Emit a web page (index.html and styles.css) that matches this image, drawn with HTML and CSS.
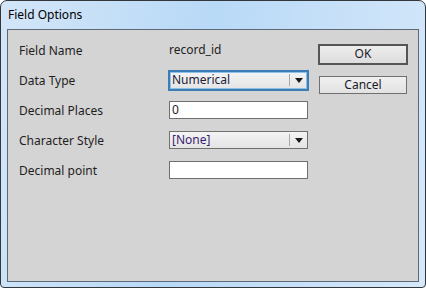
FILE: index.html
```html
<!DOCTYPE html>
<html lang="en">
<head>
    <meta charset="UTF-8">
    <meta name="viewport" content="width=device-width, initial-scale=1.0">
    <title>Field Options</title>
    <link rel="stylesheet" href="styles.css">
</head>
<body>

    <div class="window">
        <div class="titlebar">Field Options</div>

        <div class="client">
            <div class="form">
                <div class="label">Field Name</div>
                <div class="value">record_id</div>

                <div class="label">Data Type</div>
                <div class="select focused">
                    <span class="select-text">Numerical</span>
                    <span class="select-sep"></span>
                    <span class="select-arrow"></span>
                </div>

                <div class="label">Decimal Places</div>
                <div class="input">0</div>

                <div class="label">Character Style</div>
                <div class="select">
                    <span class="select-text none">[None]</span>
                    <span class="select-sep"></span>
                    <span class="select-arrow"></span>
                </div>

                <div class="label">Decimal point</div>
                <div class="input"></div>
            </div>

            <!-- botoes -->
            <div class="buttons">
                <div class="btn default">OK</div>
                <div class="btn">Cancel</div>
            </div>
        </div>
    </div>

</body>
</html>
```

FILE: styles.css
```css
body {
    margin: 0;
    font-family: "Noto Sans", "Open Sans", sans-serif;
    font-size: 12px;
    color: #1e1e1e;
    background-color: #ffffff;
}

.window {
    width: 424px;
    height: 286px;
    border: 1px solid #33373c;
    border-radius: 7px 7px 4px 4px;
    background: linear-gradient(100deg, #d3e6f8 0%, #b8d9f7 45%, #d6e8fa 100%);
    display: flex;
    flex-direction: column;
}

.titlebar {
    height: 28px;
    line-height: 28px;
    padding-left: 7px;
    font-size: 12px;
    color: #000;
}

.client {
    flex: 1;
    margin: 0 6px 5px 6px;
    border: 1px solid #5d6976;
    background-color: #d4d4d4;
    display: flex;
}

.form {
    display: grid;
    grid-template-columns: 150px 139px;
    grid-auto-rows: 30px;
    align-items: center;
    padding: 5px 0 0 11px;
}

.label {
    color: #1e1e1e;
}

.value {
    color: #1e1e1e;
    margin-top: -1px;
}

.input {
    height: 16px;
    line-height: 16px;
    border: 1px solid #6f6f6f;
    background-color: #ffffff;
    padding-left: 2px;
    color: #1e1e1e;
}

.select {
    height: 16px;
    border: 1px solid #707070;
    background: linear-gradient(#f4f4f4, #e4e4e4);
    display: flex;
    align-items: center;
}

.select.focused {
    height: 17px;
    margin: 0 -1px;
    border: 2px solid #3d7db5;
    box-shadow: inset 0 0 0 1px #8fc0e8;
}

.select-text {
    flex: 1;
    padding-left: 2px;
    line-height: 16px;
    color: #1c1c3a;
}

.select-text.none {
    color: #3a1e72;
}

.select-sep {
    width: 1px;
    height: 12px;
    background-color: #a8a8a8;
}

.select-arrow {
    width: 17px;
    display: flex;
    justify-content: center;
}

.select-arrow::before {
    content: "";
    border-left: 4px solid transparent;
    border-right: 4px solid transparent;
    border-top: 5px solid #1a1a1a;
}

.buttons {
    display: flex;
    flex-direction: column;
    padding: 14px 0 0 10px;
}

.btn {
    width: 86px;
    height: 16px;
    line-height: 16px;
    border: 1px solid #707070;
    background: linear-gradient(#f0f0f0, #e2e2e2);
    text-align: center;
    color: #1a1a2a;
    margin: 0 1px;
}

.btn.default {
    width: 86px;
    height: 17px;
    margin: 0 0 11px 0;
    border: 2px solid #555555;
    background: linear-gradient(#ededed, #dddddd);
}
```
